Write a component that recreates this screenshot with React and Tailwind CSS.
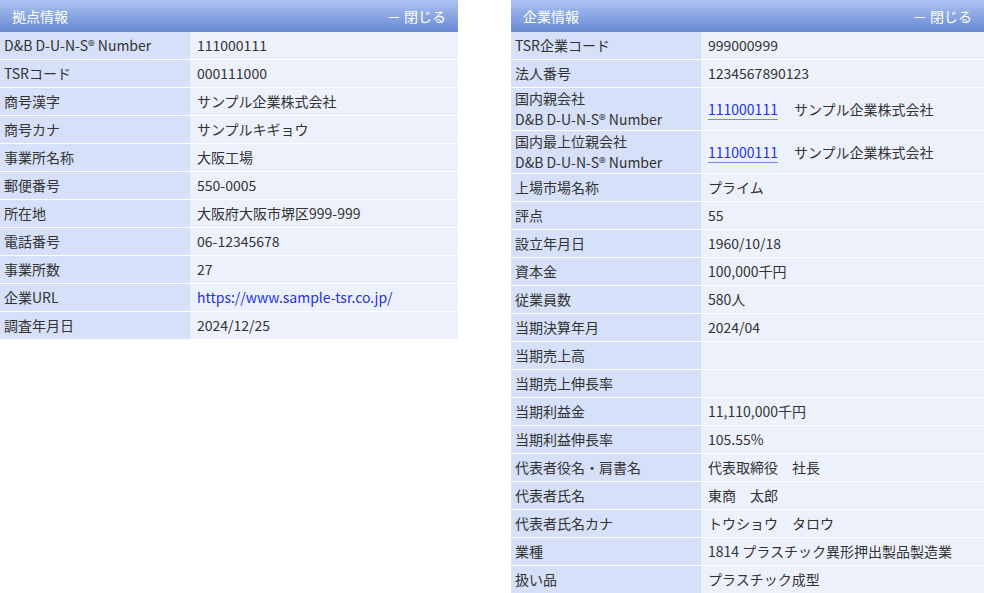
const font = { fontFamily: '"Noto Sans CJK JP", "Liberation Sans", sans-serif' };

const left = [
  ["D&B D-U-N-S® Number", "111000111"],
  ["TSRコード", "000111000"],
  ["商号漢字", "サンプル企業株式会社"],
  ["商号カナ", "サンプルキギョウ"],
  ["事業所名称", "大阪工場"],
  ["郵便番号", "550-0005"],
  ["所在地", "大阪府大阪市堺区999-999"],
  ["電話番号", "06-12345678"],
  ["事業所数", "27"],
  ["企業URL", { url: "https://www.sample-tsr.co.jp/" }],
  ["調査年月日", "2024/12/25"],
];

const right = [
  ["TSR企業コード", "999000999"],
  ["法人番号", "1234567890123"],
  [["国内親会社", "D&B D-U-N-S® Number"], { duns: "111000111", name: "サンプル企業株式会社" }],
  [["国内最上位親会社", "D&B D-U-N-S® Number"], { duns: "111000111", name: "サンプル企業株式会社" }],
  ["上場市場名称", "プライム"],
  ["評点", "55"],
  ["設立年月日", "1960/10/18"],
  ["資本金", "100,000千円"],
  ["従業員数", "580人"],
  ["当期決算年月", "2024/04"],
  ["当期売上高", ""],
  ["当期売上伸長率", ""],
  ["当期利益金", "11,110,000千円"],
  ["当期利益伸長率", "105.55%"],
  ["代表者役名・肩書名", "代表取締役　社長"],
  ["代表者氏名", "東商　太郎"],
  ["代表者氏名カナ", "トウショウ　タロウ"],
  ["業種", "1814 プラスチック異形押出製品製造業"],
  ["扱い品", "プラスチック成型"],
];

function Value({ v }) {
  if (v && v.url) return <span className="text-[#2233dd]">{v.url}</span>;
  if (v && v.duns)
    return (
      <span>
        <span className="text-[#2233dd] border-b border-[#7a86ee]">{v.duns}</span>
        <span className="ml-4">{v.name}</span>
      </span>
    );
  return v;
}

function Panel({ title, rows, width }) {
  return (
    <div className={width}>
      <div className="h-8 flex items-center justify-between px-3 text-white text-[14px] bg-gradient-to-b from-[#adc3f2] to-[#6788d2]">
        <span>{title}</span>
        <span>－ 閉じる</span>
      </div>
      {rows.map(([k, v], i) => (
        <div key={i} className="flex border-b border-white text-[14px] text-[#333]">
          <div className="w-[190px] shrink-0 bg-[#d6e0f8] px-1 flex flex-col justify-center min-h-[27px] leading-[21px]">
            {Array.isArray(k) ? k.map((t) => <span key={t}>{t}</span>) : k}
          </div>
          <div className="flex-1 bg-[#edf1fb] px-[7px] flex items-center">
            <Value v={v} />
          </div>
        </div>
      ))}
    </div>
  );
}

export default function App() {
  return (
    <div className="w-[984px] h-[593px] overflow-hidden bg-white flex items-start justify-between" style={font}>
      <Panel title="拠点情報" rows={left} width="w-[458px]" />
      <Panel title="企業情報" rows={right} width="w-[473px]" />
    </div>
  );
}
